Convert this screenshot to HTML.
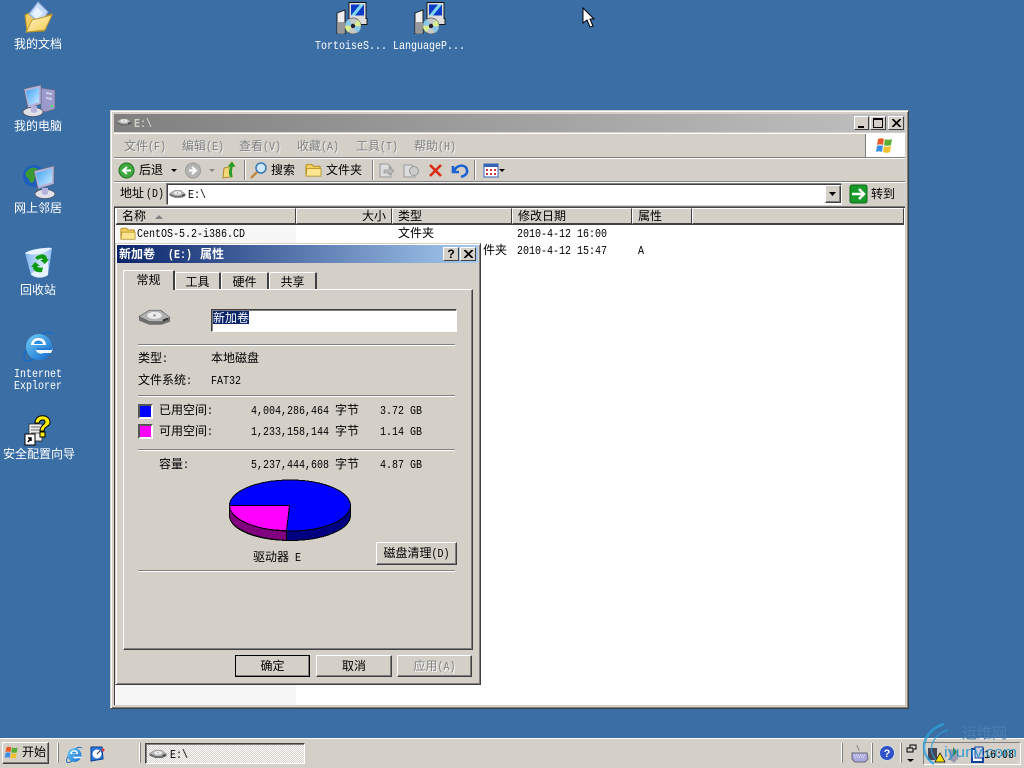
<!DOCTYPE html>
<html lang="zh"><head><meta charset="utf-8"><title>E:\</title>
<style>
html,body{margin:0;padding:0}
body{width:1024px;height:768px;overflow:hidden;position:relative;background:#3a6ea5;font:12px/14px "WenQuanYi Zen Hei","Noto Sans CJK SC",sans-serif;color:#000}
div,span,svg{position:absolute}
i{font:normal 10px/14px "Liberation Mono",monospace;display:inline-block;transform:scaleY(1.2)}
.t{white-space:nowrap}
.w{color:#fff;text-align:center;width:100px}
.up{background:#d4d0c8;box-sizing:border-box;border:1px solid;border-color:#fff #404040 #404040 #fff;box-shadow:inset -1px -1px 0 #808080}
.sep{height:1px;background:#808080;border-bottom:1px solid #fff;left:138px;width:317px}
.tb{width:1px;background:#808080;border-right:1px solid #fff;top:160px;height:20px}
.m{color:#808080;top:139px;text-shadow:1px 1px 0 #eee}
.hd{top:208px;height:16px;background:#d4d0c8;box-sizing:border-box;border:1px solid;border-color:#fff #404040 #404040 #fff;line-height:14px;padding:0 5px}
.wb{width:15px;height:14px;top:116px;background:#d4d0c8;box-sizing:border-box;border:1px solid;border-color:#fff #404040 #404040 #fff}
.tab{background:#d4d0c8;box-sizing:border-box;border:1px solid #fff;border-right:2px solid #404040;border-bottom:0;border-radius:2px 2px 0 0;text-align:center}
</style></head><body>
<svg width="0" height="0" style="left:0;top:0"><defs>
<linearGradient id="scr" x1="0" y1="0" x2="1" y2="1"><stop offset="0" stop-color="#3f9ff5"/><stop offset="1" stop-color="#c8ecff"/></linearGradient>
<linearGradient id="gold" x1="0" y1="0" x2="1" y2="1"><stop offset="0" stop-color="#fff8c8"/><stop offset="1" stop-color="#f2c850"/></linearGradient>
<linearGradient id="bin" x1="0" y1="0" x2="1" y2="0"><stop offset="0" stop-color="#7fb4ee"/><stop offset=".6" stop-color="#cfe4fb"/><stop offset="1" stop-color="#8fbcf0"/></linearGradient>
<linearGradient id="iee" x1="0" y1="0" x2="1" y2="1"><stop offset="0" stop-color="#6fd0f8"/><stop offset="1" stop-color="#1468cc"/></linearGradient>
<symbol id="drive" viewBox="0 0 32 16"><path d="M1 7v4l10 4h12l8-3V8z" fill="#6e6e6e"/><path d="M1 7 11 1h11l9 7-8 4H11z" fill="#b4b4b4" stroke="#666" stroke-width=".7"/><ellipse cx="16" cy="6" rx="7" ry="3.400" fill="#ececec"/><circle cx="16" cy="6" r="1.200" fill="#888"/><path d="M24 11l5-2" stroke="#333" stroke-width="2"/></symbol>
<symbol id="setup" viewBox="0 0 32 32"><path d="M1 11 9 8v24H1z" fill="#eee" stroke="#111" stroke-width=".9"/><path d="M2 20h6v11H2z" fill="#999"/><path d="M13 .500h17v16h1v6H22v-1h-9z" fill="#dcdcdc" stroke="#111" stroke-width=".9"/><rect x="15" y="2.500" width="13" height="11" fill="#0a3cc8"/><path d="M15 13.500 24 2.500h4L19 13.500z" fill="#7fd8f0"/><circle cx="17" cy="24" r="8" fill="#c8c8c8" stroke="#555" stroke-width=".7"/><path d="M17 24l5-6a8 8 0 0 1 3 6zM17 24l-5 6a8 8 0 0 1-3-6z" fill="#d8f090"/><path d="M17 24l8 1a8 8 0 0 1-4 6zM17 24l-8-1a8 8 0 0 1 4-6z" fill="#88c8e8"/><circle cx="17" cy="24" r="2.200" fill="#223"/></symbol>
<symbol id="ie" viewBox="0 0 32 32"><path d="M30 4C25-1 11 7 4 19 0 26 0 31 4 31c3 0 7-2 10-4" fill="none" stroke="#1d6cc4" stroke-width="1.800"/><circle cx="16" cy="17" r="13" fill="url(#iee)"/><path d="M8 15h15c0-4-3-7-7.500-7S8 11 8 15z" fill="#fff"/><path d="M11 14c0-2 2-3.500 4.500-3.500s4 1.500 4.500 3.500z" fill="#2a90e4"/><path d="M8 18h22c0 1-1 3-2 5H20c-1 1-4 1-6-1-1-1-1-2-1-4z" fill="#fff" opacity=".95"/><path d="M13 18h17l-1 2H13.500z" fill="#1f7fd8"/></symbol>
<symbol id="folder" viewBox="0 0 18 16"><path d="M1 14V3l2-1h4l2 2h7v10z" fill="#f3cf60" stroke="#b08a20"/><path d="M1 14.500l1-8h15v8z" fill="#fbe58e" stroke="#b08a20" stroke-width=".8"/></symbol>
<symbol id="flag" viewBox="0 0 20 20"><path d="M3 3c2-1 4-1 6 0L8 9C6 8 4 8 2 9z" fill="#e8592a"/><path d="M10 3c2 1 5 1 7 0l-1 6c-2 1-5 1-7 0z" fill="#5cae33"/><path d="M2 10c2-1 4-1 6 0l-1 6c-2-1-4-1-6 0z" fill="#3b8ee6"/><path d="M9 10c2 1 5 1 7 0l-1 6c-2 1-5 1-7 0z" fill="#f6c02c"/></symbol>
</defs></svg>

<!-- desktop icons -->
<svg style="left:24px;top:1px" width="30" height="32" viewBox="0 0 30 32"><path d="M1 14 7 11l6 6 15-4-8 17L3 31z" fill="#f2cf64" stroke="#b58c22"/><path d="M14 1 24 11 16 23 5 13z" fill="#c4dcf8" stroke="#8aa8d8"/><path d="M13 6l6 6-6 6-5-5z" fill="#e6f2ff"/><path d="M2 31 8 19l20-5-7 15z" fill="url(#gold)" stroke="#c09a30"/></svg>
<div class="t w" style="left:-12px;top:37px">我的文档</div>
<svg style="left:22px;top:84px" width="34" height="33" viewBox="0 0 34 33"><path d="M19 4 33 6v19l-10 3-4-2z" fill="#9a9acc" stroke="#667" stroke-width=".6"/><path d="M24 8l6 1v2l-6-1zM24 13l6 1v2l-6-1z" fill="#d0d0ec"/><circle cx="30" cy="22" r="1" fill="#3f3"/><path d="M2 5 19 1v19L6 24z" fill="#b4b4dc" stroke="#667" stroke-width=".6"/><path d="M4 7 17 3.500V18L7 21z" fill="url(#scr)"/><ellipse cx="11" cy="28" rx="10" ry="4.500" fill="#e0e0e8" stroke="#445" stroke-width=".6"/><path d="M9 22h6v6l-3 1-3-1z" fill="#b4b4dc"/></svg>
<div class="t w" style="left:-12px;top:119px">我的电脑</div>
<svg style="left:22px;top:165px" width="34" height="34" viewBox="0 0 34 34"><circle cx="12" cy="11" r="11" fill="#1e5cc0"/><path d="M4 7c4-6 11-5 14-1 0 5-3 4-5 7-1 5-4 7-6 2-1-3-5-3-3-8z" fill="#3b9a33"/><path d="M12 6 32 1v18L16 24z" fill="#b4b4dc" stroke="#667" stroke-width=".6"/><path d="M14 8 30 3.500V17L17 21z" fill="url(#scr)"/><ellipse cx="23" cy="29" rx="10" ry="4.500" fill="#e0e0e8" stroke="#445" stroke-width=".6"/><path d="M20 23h6v6l-3 1-3-1z" fill="#b4b4dc"/></svg>
<div class="t w" style="left:-12px;top:201px">网上邻居</div>
<svg style="left:24px;top:247px" width="30" height="32" viewBox="0 0 30 32"><path d="M1 6 28 1l-4 27c-6 4-13 3-17 0z" fill="url(#bin)"/><path d="M1 6c6 3 20 1 27-5-4-1-22 1-27 5z" fill="#e6f2ff"/><path d="M7 27 24 14v14c-6 4-13 3-17-1z" fill="#e6f2ff"/><path d="M13 9c5-3 10-2 10 3h2l-4 5-5-4h3c-1-2-3-2-5 0l-3-2zM18 25c-5 1-9-1-9-5H7l4-5 5 4h-3c1 2 4 2 6 1z" fill="#0c9a10"/></svg>
<div class="t w" style="left:-12px;top:283px">回收站</div>
<svg style="left:23px;top:330px" width="32" height="32"><use href="#ie"/></svg>
<div class="t w" style="left:-12px;top:366px"><i>Internet</i></div>
<div class="t w" style="left:-12px;top:378px"><i>Explorer</i></div>
<svg style="left:24px;top:414px" width="28" height="32" viewBox="0 0 28 32"><path d="M5 10h13v17H5z" fill="#eee" stroke="#222" stroke-width=".7"/><path d="M7 13h9M7 16h9M7 19h9" stroke="#666"/><path d="M11 9c0-10 15-9 15-1 0 5-6 4-6 9h-4c0-6 5-6 5-9 0-3-5-3-6 1z" fill="#ffee00" stroke="#000"/><rect x="16" y="18" width="5" height="5" fill="#ffee00" stroke="#000"/><rect x="1" y="20" width="10" height="11" fill="#fff" stroke="#000"/><path d="M4 28l3-4m-3 0h3v3" stroke="#000" stroke-width="1.500" fill="none"/></svg>
<div class="t w" style="left:-11px;top:447px">安全配置向导</div>
<svg style="left:336px;top:2px" width="32" height="32"><use href="#setup"/></svg>
<div class="t" style="left:315px;top:38px;color:#fff"><i>TortoiseS...</i></div>
<svg style="left:414px;top:2px" width="32" height="32"><use href="#setup"/></svg>
<div class="t" style="left:393px;top:38px;color:#fff"><i>LanguageP...</i></div>
<svg style="left:582px;top:7px" width="13" height="21" viewBox="0 0 13 21"><path d="M1 1v15l4-3 3 7 3-1-3-7h4z" fill="#fff" stroke="#000"/></svg>

<!-- explorer -->
<div style="left:110px;top:110px;width:799px;height:599px;background:#d4d0c8;box-sizing:border-box;border:1px solid;border-color:#d4d0c8 #404040 #404040 #d4d0c8;box-shadow:inset 1px 1px 0 #fff,inset -1px -1px 0 #808080"></div>
<div style="left:114px;top:114px;width:791px;height:18px;background:linear-gradient(90deg,#808080,#c0c0c0)"></div>
<svg style="left:116px;top:116px" width="16" height="12"><use href="#drive"/></svg>
<div class="t" style="left:134px;top:116px;color:#d4d0c8"><i style="font-weight:bold">E:\</i></div>
<div class="wb" style="left:854px"><div style="left:3px;top:9px;width:6px;height:2px;background:#000"></div></div>
<div class="wb" style="left:870px;width:16px"><div style="left:2px;top:1px;width:8px;height:7px;border:1px solid #000;border-top-width:2px"></div></div>
<div class="wb" style="left:888px;width:16px"><svg style="left:3px;top:2px" width="9" height="8"><path d="M0 0 8 8M1 0 9 8M8 0 0 8M9 0 1 8" stroke="#000"/></svg></div>
<div style="left:114px;top:133px;width:791px;height:1px;background:#fff"></div>
<div style="left:114px;top:157px;width:791px;height:1px;background:#808080"></div>
<div style="left:114px;top:158px;width:791px;height:1px;background:#fff"></div>
<div style="left:114px;top:181px;width:791px;height:1px;background:#808080"></div>
<div style="left:114px;top:182px;width:791px;height:1px;background:#fff"></div>
<div style="left:865px;top:134px;width:39px;height:23px;background:#fff;border-left:1px solid #808080"></div>
<svg style="left:875px;top:136px" width="20" height="20"><use href="#flag"/></svg>
<div class="t m" style="left:124px">文件<i>(F)</i></div>
<div class="t m" style="left:182px">编辑<i>(E)</i></div>
<div class="t m" style="left:239px">查看<i>(V)</i></div>
<div class="t m" style="left:297px">收藏<i>(A)</i></div>
<div class="t m" style="left:356px">工具<i>(T)</i></div>
<div class="t m" style="left:414px">帮助<i>(H)</i></div>

<!-- toolbar -->
<svg style="left:118px;top:160px" width="400" height="21" viewBox="0 0 400 21">
<circle cx="8.500" cy="10.500" r="7.500" fill="#3fa83f" stroke="#207020"/><path d="M13 10.500H6M9 7l-4 3.500L9 14" stroke="#fff" stroke-width="2" fill="none"/>
<path d="M53 9h6l-3 3z" fill="#000"/>
<circle cx="75" cy="10.500" r="7.500" fill="#b4b4b4" stroke="#999"/><path d="M71 10.500h7M74 7l4 3.500L74 14" stroke="#fff" stroke-width="2" fill="none"/>
<path d="M91 9h6l-3 3z" fill="#888"/>
<path d="M105 18 106 8l5-1 1 10z" fill="#f6d877" stroke="#a8842c"/><path d="M113 18c-4-4-2-8-1-11h-3l5-6 4 6h-3c-1 3-1 6 0 10z" fill="#2a9a30" stroke="#f6d877" stroke-width=".5"/>
<circle cx="143" cy="8" r="5" fill="#cfe6fb" stroke="#3a78b8" stroke-width="1.500"/><path d="M139 12l-6 6" stroke="#c08a40" stroke-width="2.500"/>
<use href="#folder" x="187" y="2" width="17" height="16"/>
<path d="M262 4h8l3 3v10h-11z" fill="#ddd" stroke="#999"/><path d="M266 10h5V7l5 4-5 4v-2h-5z" fill="#bbb" stroke="#888" stroke-width=".6"/>
<path d="M286 5h8l3 3v9h-11z" fill="#ddd" stroke="#999"/><circle cx="296" cy="11" r="4.500" fill="#ccc" stroke="#999"/>
<path d="M312 5l11 11M323 5 312 16" stroke="#dd2a12" stroke-width="2.600"/>
<path d="M335 6v6h6M336 11c3-7 12-7 13-1 1 4-3 6-6 7" fill="none" stroke="#1c62d0" stroke-width="2.600"/>
<rect x="366" y="4" width="14" height="13" fill="#fff" stroke="#3464b8"/><rect x="366" y="4" width="14" height="3" fill="#3464b8"/><path d="M368 9h2v2h-2zM372 9h2v2h-2zM376 9h2v2h-2zM368 13h2v2h-2zM372 13h2v2h-2zM376 13h2v2h-2z" fill="#c33"/>
<path d="M381 9h6l-3 3z" fill="#000"/>
</svg>
<div class="t" style="left:139px;top:163px">后退</div>
<div class="t" style="left:271px;top:163px">搜索</div>
<div class="t" style="left:326px;top:163px">文件夹</div>
<div class="tb" style="left:244px"></div><div class="tb" style="left:372px"></div><div class="tb" style="left:474px"></div>

<!-- address -->
<div class="t" style="left:120px;top:186px">地址<i style="margin-left:2px">(D)</i></div>
<div style="left:167px;top:184px;width:675px;height:21px;background:#fff;box-sizing:border-box;border:1px solid;border-color:#404040 #fff #fff #404040;box-shadow:-1px -1px 0 #808080"></div>
<svg style="left:169px;top:188px" width="17" height="12"><use href="#drive"/></svg>
<div class="t" style="left:188px;top:187px"><i>E:\</i></div>
<div class="up" style="left:825px;top:185px;width:16px;height:18px"><svg style="left:3px;top:6px" width="8" height="5"><path d="M0 0h7L3.500 4z" fill="#000"/></svg></div>
<svg style="left:849px;top:184px" width="19" height="20" viewBox="0 0 19 20"><rect x="1" y="1" width="17" height="18" rx="2" fill="#179a27" stroke="#0c6a18"/><path d="M3 10h11M10 5l5 5-5 5" stroke="#fff" stroke-width="2.500" fill="none"/></svg>
<div class="t" style="left:871px;top:187px">转到</div>
<div style="left:114px;top:206px;width:791px;height:1px;background:#808080"></div>

<!-- list -->
<div style="left:114px;top:207px;width:791px;height:498px;background:#fff;box-sizing:border-box;border-top:1px solid #404040;border-left:1px solid #404040"></div>
<div style="left:116px;top:224px;width:180px;height:481px;background:#f7f7f7"></div>
<div class="hd" style="left:116px;width:180px">名称<svg style="left:37px;top:5px" width="10" height="6"><path d="M1 5h8L5 1z" fill="#808080"/></svg></div>
<div class="hd" style="left:296px;width:96px;text-align:right">大小</div>
<div class="hd" style="left:392px;width:120px">类型</div>
<div class="hd" style="left:512px;width:120px">修改日期</div>
<div class="hd" style="left:632px;width:60px">属性</div>
<div class="hd" style="left:692px;width:212px"></div>
<div style="left:116px;top:224px;width:788px;height:1px;background:#404040"></div>
<svg style="left:120px;top:226px" width="16" height="15"><use href="#folder"/></svg>
<div class="t" style="left:137px;top:226px"><i>CentOS-5.2-i386.CD</i></div>
<div class="t" style="left:398px;top:226px">文件夹</div>
<div class="t" style="left:517px;top:226px"><i>2010-4-12 16:00</i></div>
<div class="t" style="left:483px;top:243px">件夹</div>
<div class="t" style="left:517px;top:243px"><i>2010-4-12 15:47</i></div>
<div class="t" style="left:638px;top:243px"><i>A</i></div>

<!-- dialog -->
<div style="left:115px;top:243px;width:366px;height:442px;background:#d4d0c8;box-sizing:border-box;border:1px solid;border-color:#d4d0c8 #404040 #404040 #d4d0c8;box-shadow:inset 1px 1px 0 #fff,inset -1px -1px 0 #808080"></div>
<div style="left:117px;top:245px;width:361px;height:18px;background:linear-gradient(90deg,#0a246a,#a6caf0)"></div>
<div class="t" style="left:119px;top:247px;color:#fff;font-weight:bold">新加卷</div>
<div class="t" style="left:168px;top:247px;color:#fff"><i style="font-weight:bold">(E:)</i></div>
<div class="t" style="left:200px;top:247px;color:#fff;font-weight:bold">属性</div>
<div class="wb" style="left:443px;top:247px;font:bold 12px/12px 'Liberation Sans';text-align:center;width:16px">?</div>
<div class="wb" style="left:460px;top:247px;width:16px"><svg style="left:3px;top:2px" width="9" height="8"><path d="M0 0 8 8M1 0 9 8M8 0 0 8M9 0 1 8" stroke="#000"/></svg></div>
<div style="left:123px;top:289px;width:350px;height:361px;background:#d4d0c8;box-sizing:border-box;border:1px solid;border-color:#fff #404040 #404040 #fff;box-shadow:inset -1px -1px 0 #808080"></div>
<div class="tab" style="left:175px;top:272px;width:46px;height:17px;line-height:17px">工具</div>
<div class="tab" style="left:221px;top:272px;width:48px;height:17px;line-height:17px">硬件</div>
<div class="tab" style="left:269px;top:272px;width:48px;height:17px;line-height:17px">共享</div>
<div class="tab" style="left:123px;top:270px;width:52px;height:20px;line-height:18px">常规</div>
<svg style="left:138px;top:309px" width="33" height="17"><use href="#drive"/></svg>
<div style="left:211px;top:309px;width:246px;height:23px;background:#fff;box-sizing:border-box;border:1px solid;border-color:#404040 #fff #fff #404040;box-shadow:inset 1px 1px 0 #808080"></div>
<div class="t" style="left:213px;top:311px;height:13px;background:#0a246a;color:#fff;line-height:13px">新加卷</div>
<div class="sep" style="top:344px"></div>
<div class="t" style="left:138px;top:351px">类型<i>:</i></div><div class="t" style="left:211px;top:351px">本地磁盘</div>
<div class="t" style="left:138px;top:373px">文件系统<i>:</i></div><div class="t" style="left:211px;top:373px"><i>FAT32</i></div>
<div class="sep" style="top:395px"></div>
<div style="left:138px;top:404px;width:15px;height:15px;box-sizing:border-box;background:#00f;border:2px solid;border-color:#555 #fff #fff #555"></div>
<div class="t" style="left:159px;top:403px">已用空间<i>:</i></div><div class="t" style="left:251px;top:403px"><i>4,004,286,464</i></div><div class="t" style="left:335px;top:403px">字节</div><div class="t" style="left:380px;top:403px"><i>3.72 GB</i></div>
<div style="left:138px;top:424px;width:15px;height:15px;box-sizing:border-box;background:#f0f;border:2px solid;border-color:#555 #fff #fff #555"></div>
<div class="t" style="left:159px;top:424px">可用空间<i>:</i></div><div class="t" style="left:251px;top:424px"><i>1,233,158,144</i></div><div class="t" style="left:335px;top:424px">字节</div><div class="t" style="left:380px;top:424px"><i>1.14 GB</i></div>
<div class="sep" style="top:449px"></div>
<div class="t" style="left:159px;top:457px">容量<i>:</i></div><div class="t" style="left:251px;top:457px"><i>5,237,444,608</i></div><div class="t" style="left:335px;top:457px">字节</div><div class="t" style="left:380px;top:457px"><i>4.87 GB</i></div>
<svg style="left:228px;top:479px" width="125" height="64" viewBox="0 0 125 64" shape-rendering="crispEdges">
<path d="M1.500 26.500v10c0 14 27 25 60.500 25s60.500-11 60.500-25v-10z" fill="#000080" stroke="#000"/>
<path d="M1.500 26.500v10c0 12 22 23 57 25V52z" fill="#800080" stroke="#000"/>
<ellipse cx="62" cy="26.500" rx="60.500" ry="25.500" fill="#00f" stroke="#000"/>
<path d="M61.500 26.500H1.500c0 13 25 25 57 25z" fill="#f0f" stroke="#000"/>
</svg>
<div class="t" style="left:253px;top:550px">驱动器<i style="margin-left:6px">E</i></div>
<div class="up" style="left:376px;top:542px;width:81px;height:23px;text-align:center;line-height:20px">磁盘清理<i>(D)</i></div>
<div class="sep" style="top:570px"></div>
<div class="up" style="left:235px;top:655px;width:75px;height:22px;text-align:center;line-height:19px;outline:1px solid #000;outline-offset:-1px">确定</div>
<div class="up" style="left:316px;top:655px;width:76px;height:22px;text-align:center;line-height:19px">取消</div>
<div class="up" style="left:397px;top:655px;width:75px;height:22px;text-align:center;line-height:19px;color:#808080;text-shadow:1px 1px 0 #fff">应用<i>(A)</i></div>

<!-- taskbar -->
<div style="left:0;top:738px;width:1024px;height:30px;background:#d4d0c8;border-top:1px solid #fff;box-sizing:border-box"></div>
<div class="up" style="left:2px;top:742px;width:47px;height:22px"></div>
<svg style="left:4px;top:745px" width="16" height="16"><use href="#flag"/></svg>
<div class="t" style="left:22px;top:745px">开始</div>
<div style="left:57px;top:743px;width:1px;height:20px;background:#fff;border-right:1px solid #808080"></div>
<svg style="left:66px;top:746px" width="17" height="17"><use href="#ie"/></svg>
<svg style="left:88px;top:745px" width="18" height="18" viewBox="0 0 18 18"><path d="M3 2h11l1 12-12 2z" fill="#2a78d8" stroke="#0c3e90"/><circle cx="9" cy="9" r="4.500" fill="#fff"/><path d="M9 9l3-3" stroke="#333"/><circle cx="15" cy="5" r="1.500" fill="#d33"/></svg>
<div style="left:139px;top:743px;width:1px;height:20px;background:#fff;border-right:1px solid #808080"></div>
<div style="left:145px;top:743px;width:160px;height:21px;box-sizing:border-box;border:1px solid;border-color:#404040 #fff #fff #404040;box-shadow:inset 1px 1px 0 #808080;background:#fff repeating-conic-gradient(#d4d0c8 0 25%,#fff 0 50%) 0 0/2px 2px"></div>
<svg style="left:149px;top:748px" width="18" height="12"><use href="#drive"/></svg>
<div class="t" style="left:170px;top:747px"><i>E:\</i></div>
<div style="left:841px;top:743px;width:1px;height:20px;background:#fff;border-right:1px solid #808080"></div>
<svg style="left:851px;top:745px" width="18" height="18" viewBox="0 0 18 18"><path d="M6 0c0 4 2 2 2 6" stroke="#888" fill="none"/><path d="M1 8h15l1 6-3 3H4l-3-3z" fill="#aaaadc" stroke="#667"/><path d="M3 10h12M4 12h10" stroke="#eef" stroke-dasharray="1 1"/></svg>
<div style="left:871px;top:743px;width:1px;height:20px;background:#fff;border-right:1px solid #808080"></div>
<svg style="left:879px;top:745px" width="16" height="16"><circle cx="8" cy="8" r="7.500" fill="#2f52c8" stroke="#cdd"/><text x="8" y="12" font-family="Liberation Sans" font-weight="bold" font-size="11" fill="#fff" text-anchor="middle">?</text></svg>
<div style="left:900px;top:743px;width:1px;height:20px;background:#fff;border-right:1px solid #808080"></div>
<svg style="left:905px;top:744px" width="12" height="20"><path d="M5 1h6v4H8v3H2V4h3zM5 4h3" fill="none" stroke="#000"/><path d="M2 15h7l-3.500 3z" fill="#000"/></svg>
<div style="left:923px;top:742px;width:98px;height:23px;box-sizing:border-box;border:1px solid;border-color:#808080 #fff #fff #808080"></div>
<svg style="left:926px;top:746px" width="70" height="18" viewBox="0 0 70 18"><rect x="2" y="2" width="9" height="12" fill="#445"/><path d="M9 16l5-9 5 9z" fill="#fbe000" stroke="#000" stroke-width=".7"/><path d="M24 3l8 2v8l-4 4-5-4z" fill="#9a9ab0"/><path d="M27 1l4 5-4 4z" fill="#2a8a3a"/><rect x="46" y="3" width="11" height="13" fill="#fff" stroke="#1040a0" stroke-width="2"/><rect x="49" y="1" width="8" height="11" fill="#ccd" stroke="#1040a0"/></svg>
<div class="t" style="left:984px;top:747px"><i>16:08</i></div>
<!-- watermark -->
<svg style="left:918px;top:720px" width="106" height="48" viewBox="0 0 106 48"><path d="M26 4C6 10-2 32 16 44" fill="none" stroke="#2f9fd8" stroke-width="2.500" opacity=".8"/><path d="M30 10C16 14 8 28 18 40" fill="none" stroke="#2f9fd8" stroke-width="1.500" opacity=".7"/><text x="44" y="18" font-family="WenQuanYi Zen Hei,Noto Sans CJK SC,sans-serif" font-size="15" fill="#4d7fae">运维网</text><text x="26" y="37" font-family="Liberation Sans,sans-serif" font-size="15" fill="#1e90c8" opacity=".85" textLength="73" lengthAdjust="spacingAndGlyphs">iyunv.com</text></svg>
</body></html>
